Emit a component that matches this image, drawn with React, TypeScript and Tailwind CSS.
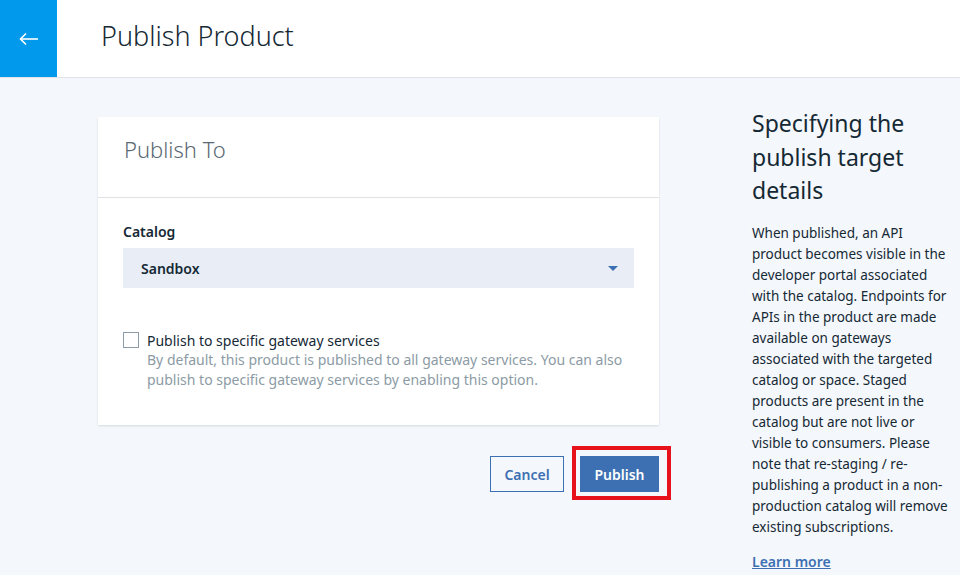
import React from "react";

export default function App() {
  return (
    <div
      className="w-[960px] h-[575px] overflow-hidden bg-[#f4f7fb] text-[#152935]"
      style={{ fontFamily: '"Noto Sans", "Open Sans", sans-serif' }}
    >
      {/* Header */}
      <div className="flex h-[78px] bg-white border-b border-[#dfe3e6]">
        <div className="w-[57px] h-[77px] bg-[#0099eb] flex items-center justify-center">
          <svg width="20" height="14" viewBox="0 0 20 14" fill="none" stroke="white" strokeWidth="1.6">
            <path d="M19 7H1.5" />
            <path d="M7 1.5L1.5 7L7 12.5" />
          </svg>
        </div>
        <div className="pl-[44px] flex items-center pb-[5px]">
          <h1 className="text-[27px] font-light text-[#152935]">Publish Product</h1>
        </div>
      </div>

      {/* Body */}
      <div className="flex pt-[39px]">
        <div className="ml-[98px] w-[561px] flex flex-col">
          <div className="bg-white shadow-[0_1px_2px_rgba(0,0,0,0.12)]">
            <div className="h-[81px] border-b border-[#dfe3e6] px-[26px] pt-[16px]">
              <h2 className="text-[22px] font-light text-[#5a6872]">Publish To</h2>
            </div>
            <div className="px-[25px] pt-[25px] pb-[35px]">
              <div className="text-[14px] font-semibold leading-[18px] text-[#152935]">Catalog</div>
              <div className="mt-[7px] h-[40px] w-[511px] bg-[#e9eef6] flex items-center justify-between pl-[18px] pr-[16px]">
                <span className="text-[14px] font-semibold text-[#152935]">Sandbox</span>
                <svg width="10" height="5" viewBox="0 0 10 5">
                  <path d="M0 0h10L5 5z" fill="#3d70b2" />
                </svg>
              </div>
              <div className="mt-[44px] flex">
                <div className="w-[16px] h-[16px] border border-[#8c9ba5] bg-white shrink-0" />
                <div className="ml-[8px]">
                  <div className="text-[14px] leading-[18px] text-[#152935]">Publish to specific gateway services</div>
                  <div className="text-[14px] leading-[20px] text-[#8c9ba5]">
                    By default, this product is published to all gateway services. You can also publish to specific gateway services by enabling this option.
                  </div>
                </div>
              </div>
            </div>
          </div>
          <div className="flex justify-end mt-[31px]">
            <button className="h-[36px] w-[74px] border border-[#3d70b2] text-[#3d70b2] text-[14px] font-semibold bg-transparent">
              Cancel
            </button>
            <div className="relative ml-[16px]">
              <button className="h-[36px] w-[79px] bg-[#3d70b2] text-white text-[14px] font-semibold">
                Publish
              </button>
              <div className="absolute -left-[8px] -top-[10px] -right-[12px] -bottom-[8px] border-4 border-[#e8121c] pointer-events-none" />
            </div>
          </div>
        </div>

        <div className="ml-[93px] w-[200px] -mt-[10px]">
          <h3 className="text-[23px] leading-[33.5px] font-normal text-[#152935]">
            Specifying the publish target details
          </h3>
          <p className="mt-[15px] text-[13.5px] leading-[21px] text-[#152935]">
            When published, an API product becomes visible in the developer portal associated with the catalog. Endpoints for APIs in the product are made available on gateways associated with the targeted catalog or space. Staged products are present in the catalog but are not live or visible to consumers. Please note that re-staging / re-publishing a product in a non-production catalog will remove existing subscriptions.
          </p>
          <a className="block mt-[13px] text-[14px] font-semibold underline text-[#3d70b2]">Learn more</a>
        </div>
      </div>
    </div>
  );
}
